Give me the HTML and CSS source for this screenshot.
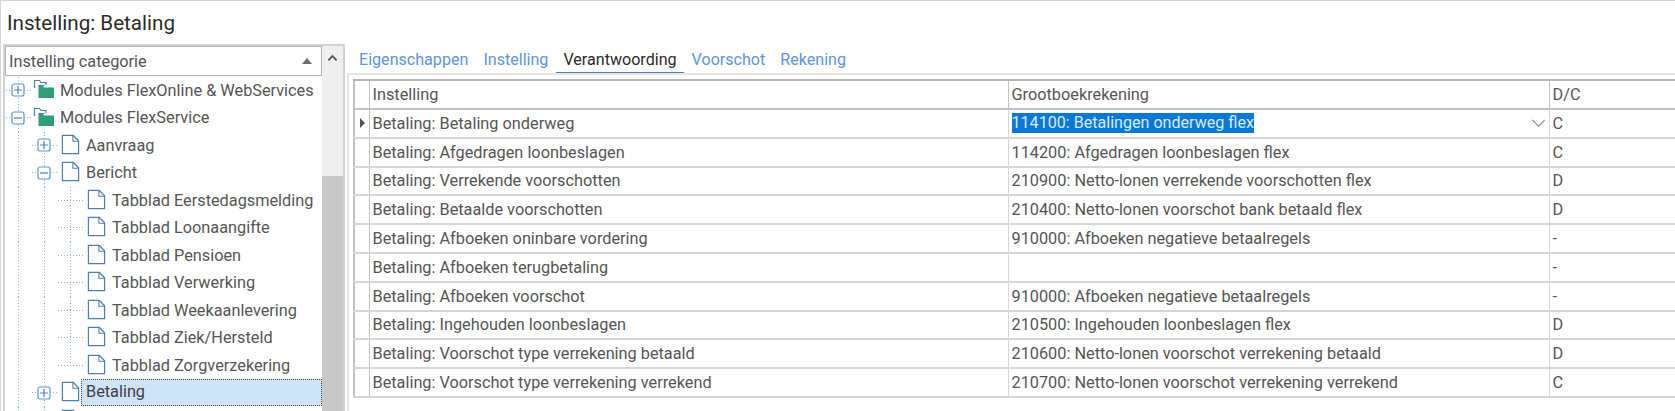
FILE: index.html
```html
<!DOCTYPE html>
<html lang="nl">
<head>
<meta charset="utf-8">
<title>Instelling: Betaling</title>
<link rel="stylesheet" href="styles.css">
</head>
<body>
<svg class="defs" width="0" height="0" aria-hidden="true">
  <symbol id="plus" viewBox="0 0 14 14"><rect x="1" y="1" width="12" height="12" rx="2" fill="#fff" stroke="#5b94d6" stroke-width="1.2"/><path d="M3 7h8M7 3v8" stroke="#4a7fc0" stroke-width="1.2" fill="none"/></symbol>
  <symbol id="minus" viewBox="0 0 14 14"><rect x="1" y="1" width="12" height="12" rx="2" fill="#fff" stroke="#5b94d6" stroke-width="1.2"/><path d="M3 7h8" stroke="#4a7fc0" stroke-width="1.2" fill="none"/></symbol>
  <symbol id="doc" viewBox="0 0 20 22"><path d="M1.500 1.500h11.500l5.500 5.500v13.500h-17z" fill="#fff" stroke="#4f7eb2" stroke-width="1.300"/><path d="M12.500 1.500v6h6" fill="none" stroke="#4f7eb2" stroke-width="1.100"/></symbol>
  <symbol id="folder" viewBox="0 0 22 20"><path d="M1.500 9V1.500h5l1.500 2h5v2.500" fill="none" stroke="#4f7eb2" stroke-width="1.200"/><path d="M5.500 6.500h4l1.500 2h10V19h-15.500z" fill="#2f9e78"/><path d="M5.500 6.500h6" stroke="#4f7eb2" stroke-width="1"/></symbol>
</svg>
<div class="app">
  <header class="titlebar"><h1 class="title">Instelling: Betaling</h1></header>
  <main class="main">
    <aside class="side">
      <div class="side-col">
        <div class="side-head"><span>Instelling categorie</span><i class="tri"></i></div>
        <div class="tree">
          <div class="row"><span class="cell node"><svg class="exp"><use href="#plus"/></svg></span><span class="cell icon"><svg class="folder"><use href="#folder"/></svg></span><span class="label">Modules FlexOnline &amp; WebServices</span></div>
          <div class="row"><span class="cell node"><svg class="exp"><use href="#minus"/></svg></span><span class="cell icon"><svg class="folder"><use href="#folder"/></svg></span><span class="label">Modules FlexService</span></div>
          <div class="row"><span class="cell line"></span><span class="cell node"><svg class="exp"><use href="#plus"/></svg></span><span class="cell icon"><svg class="doc"><use href="#doc"/></svg></span><span class="label">Aanvraag</span></div>
          <div class="row"><span class="cell line"></span><span class="cell node"><svg class="exp"><use href="#minus"/></svg></span><span class="cell icon"><svg class="doc"><use href="#doc"/></svg></span><span class="label">Bericht</span></div>
          <div class="row"><span class="cell line"></span><span class="cell line"></span><span class="cell tee"></span><span class="cell icon"><svg class="doc"><use href="#doc"/></svg></span><span class="label">Tabblad Eerstedagsmelding</span></div>
          <div class="row"><span class="cell line"></span><span class="cell line"></span><span class="cell tee"></span><span class="cell icon"><svg class="doc"><use href="#doc"/></svg></span><span class="label">Tabblad Loonaangifte</span></div>
          <div class="row"><span class="cell line"></span><span class="cell line"></span><span class="cell tee"></span><span class="cell icon"><svg class="doc"><use href="#doc"/></svg></span><span class="label">Tabblad Pensioen</span></div>
          <div class="row"><span class="cell line"></span><span class="cell line"></span><span class="cell tee"></span><span class="cell icon"><svg class="doc"><use href="#doc"/></svg></span><span class="label">Tabblad Verwerking</span></div>
          <div class="row"><span class="cell line"></span><span class="cell line"></span><span class="cell tee"></span><span class="cell icon"><svg class="doc"><use href="#doc"/></svg></span><span class="label">Tabblad Weekaanlevering</span></div>
          <div class="row"><span class="cell line"></span><span class="cell line"></span><span class="cell tee"></span><span class="cell icon"><svg class="doc"><use href="#doc"/></svg></span><span class="label">Tabblad Ziek/Hersteld</span></div>
          <div class="row"><span class="cell line"></span><span class="cell line"></span><span class="cell elbow"></span><span class="cell icon"><svg class="doc"><use href="#doc"/></svg></span><span class="label">Tabblad Zorgverzekering</span></div>
          <div class="row"><span class="cell line"></span><span class="cell node"><svg class="exp"><use href="#plus"/></svg></span><span class="cell icon"><svg class="doc"><use href="#doc"/></svg></span><span class="label selected">Betaling</span></div>
          <div class="row"><span class="cell line"></span><span class="cell line"></span><span class="cell icon"><svg class="doc"><use href="#doc"/></svg></span></div>
        </div>
      </div>
      <div class="scrollbar">
        <div class="scroll-btn"><svg class="chev" viewBox="0 0 12 8"><path d="M1.500 6.500L6 2l4.500 4.500" fill="none" stroke="#555" stroke-width="2"/></svg></div>
        <div class="scroll-track"></div>
        <div class="scroll-thumb"></div>
      </div>
    </aside>
    <section class="content">
      <nav class="tabs">
        <a class="tab">Eigenschappen</a>
        <a class="tab">Instelling</a>
        <a class="tab active">Verantwoording</a>
        <a class="tab">Voorschot</a>
        <a class="tab">Rekening</a>
      </nav>
      <div class="panel">
        <table class="grid">
          <colgroup><col class="c0"><col class="c1"><col class="c2"><col></colgroup>
          <thead>
            <tr><th class="ind"></th><th>Instelling</th><th>Grootboekrekening</th><th>D/C</th></tr>
          </thead>
          <tbody>
            <tr><td class="ind"><i class="marker"></i></td><td>Betaling: Betaling onderweg</td><td><div class="edit"><span class="sel">114100: Betalingen onderweg flex</span><svg class="drop" viewBox="0 0 16 9"><path d="M1 1l7 7 7-7" fill="none" stroke="#8a8a8a" stroke-width="1.300"/></svg></div></td><td>C</td></tr>
            <tr><td class="ind"></td><td>Betaling: Afgedragen loonbeslagen</td><td>114200: Afgedragen loonbeslagen flex</td><td>C</td></tr>
            <tr><td class="ind"></td><td>Betaling: Verrekende voorschotten</td><td>210900: Netto-lonen verrekende voorschotten flex</td><td>D</td></tr>
            <tr><td class="ind"></td><td>Betaling: Betaalde voorschotten</td><td>210400: Netto-lonen voorschot bank betaald flex</td><td>D</td></tr>
            <tr><td class="ind"></td><td>Betaling: Afboeken oninbare vordering</td><td>910000: Afboeken negatieve betaalregels</td><td>-</td></tr>
            <tr><td class="ind"></td><td>Betaling: Afboeken terugbetaling</td><td></td><td>-</td></tr>
            <tr><td class="ind"></td><td>Betaling: Afboeken voorschot</td><td>910000: Afboeken negatieve betaalregels</td><td>-</td></tr>
            <tr><td class="ind"></td><td>Betaling: Ingehouden loonbeslagen</td><td>210500: Ingehouden loonbeslagen flex</td><td>D</td></tr>
            <tr><td class="ind"></td><td>Betaling: Voorschot type verrekening betaald</td><td>210600: Netto-lonen voorschot verrekening betaald</td><td>D</td></tr>
            <tr><td class="ind"></td><td>Betaling: Voorschot type verrekening verrekend</td><td>210700: Netto-lonen voorschot verrekening verrekend</td><td>C</td></tr>
          </tbody>
        </table>
      </div>
    </section>
  </main>
</div>
</body>
</html>
```
FILE: styles.css
```css
* { box-sizing: border-box; }
html, body { margin: 0; padding: 0; height: 411px; overflow: hidden; background: #fff; }
body { font-family: Roboto, "Liberation Sans", sans-serif; font-size: 16.300px; color: #4a4a4a; }
.defs { display: block; height: 0; width: 0; }

.app { height: 411px; display: flex; flex-direction: column; border-top: 1px solid #d4d4d4; border-left: 1px solid #d4d4d4; }
.titlebar { height: 43px; padding: 10px 0 0 6px; flex: none; }
.title { margin: 0; font-size: 20.600px; line-height: 25px; font-weight: 400; color: #2b2b2b; }

.main { flex: 1; display: flex; min-height: 0; padding-left: 2px; }

.side { width: 342px; flex: none; display: flex; border: 2px solid #d2d2d2; border-bottom: 0; padding: 0; height: 367px; overflow: hidden; }
.side-col { width: 317px; flex: none; min-width: 0; }
.side-head { height: 30px; border: 1px solid #b4b4b4; display: flex; align-items: center; justify-content: space-between; padding: 0 9px 0 3px; color: #555; }
.tri { width: 0; height: 0; border-left: 5.500px solid transparent; border-right: 5.500px solid transparent; border-bottom: 6px solid #6f6f6f; }

.tree { height: 340px; overflow: hidden; padding-top: 0.500px; }
.row { height: 27.500px; display: flex; align-items: stretch; white-space: nowrap; }
.cell { width: 26px; flex: none; display: flex; align-items: center; justify-content: center; }
.line {
  background-image: linear-gradient(to bottom, #8db6e8 50%, transparent 50%);
  background-size: 1px 3px; background-position: 13px 0; background-repeat: repeat-y;
}
.tee, .node {
  background-image: linear-gradient(to bottom, #8db6e8 50%, transparent 50%), linear-gradient(to right, #8db6e8 50%, transparent 50%);
  background-size: 1px 3px, 3px 1px;
  background-position: 13px 0, 13px 13px;
  background-repeat: repeat-y, repeat-x;
}
.elbow {
  background-image: linear-gradient(to bottom, #8db6e8 50%, transparent 50%), linear-gradient(to right, #8db6e8 50%, transparent 50%);
  background-size: 1px 3px, 3px 1px;
  background-position: 13px 1px, 13px 13px;
  background-repeat: repeat-y, repeat-x;
  clip-path: inset(0 0 13px 0);
}
.exp { width: 14px; height: 14px; display: block; }
.icon { justify-content: flex-start; }
.folder { width: 22px; height: 20px; margin: 0 0 2px 2px; display: block; }
.doc { width: 19px; height: 21px; margin: 0 0 2px 4px; display: block; }
.label { flex: 1; padding: 0 0 0 3px; line-height: 27px; color: #555; min-width: 0; }
.selected { background: #cde4f8; outline: 1px dotted #444; outline-offset: -1px; margin: 0 0 1px -2px; padding-left: 5px; line-height: 26px; color: #404040; }

.scrollbar { width: 21px; flex: none; background: #efefef; display: flex; flex-direction: column; }
.scroll-btn { height: 20px; display: flex; align-items: center; justify-content: center; flex: none; }
.chev { width: 11px; height: 8px; display: block; margin-top: 3px; }
.scroll-track { height: 110px; flex: none; }
.scroll-thumb { flex: 1; background: #c8c8c8; }

.content { flex: 1; min-width: 0; display: flex; flex-direction: column; padding: 0 0 0 2px; }
.tabs { height: 29px; display: flex; align-items: flex-start; padding: 4px 0 0 10px; gap: 0; flex: none; }
.tab { padding: 2px 7.500px 0; height: 26px; line-height: 19px; color: #5b95dc; font-size: 16.100px; white-space: nowrap; border-bottom: 2px solid transparent; }
.tab:first-child { padding-left: 2px; }
.active { color: #2a2a2a; border-bottom-color: #3f7fc6; }

.panel { flex: 1; border-top: 2px solid #e4e4e4; border-left: 2px solid #e4e4e4; padding: 4px 0 0 4px; min-height: 0; }
.grid { width: 100%; table-layout: fixed; border-collapse: collapse; font-size: 16.300px; }
.c0 { width: 15px; }
.c1 { width: 639px; }
.c2 { width: 541px; }
th, td { height: 28.800px; padding: 0 3px; text-align: left; font-weight: 400; color: #555; border: 1px solid #d6d6d6; border-width: 0 1px 2px 1px; white-space: nowrap; overflow: hidden; }
thead th { height: 29px; border-top: 2px solid #b4b4b4; border-bottom-color: #c2c2c2; border-right-color: #c2c2c2; border-left-color: #c2c2c2; }
th:last-child, td:last-child { border-right: 0; }
.ind { padding: 0; border-left: 2px solid #c2c2c2; border-right-color: #c2c2c2; }
.marker { display: block; width: 0; height: 0; border-top: 5px solid transparent; border-bottom: 5px solid transparent; border-left: 5px solid #555; margin-left: 5px; }
.edit { display: flex; align-items: center; justify-content: space-between; }
.sel { background: #0a78d7; color: #dcebfb; font-size: 16.100px; line-height: 20px; }
.drop { width: 15px; height: 8px; display: block; }
```
